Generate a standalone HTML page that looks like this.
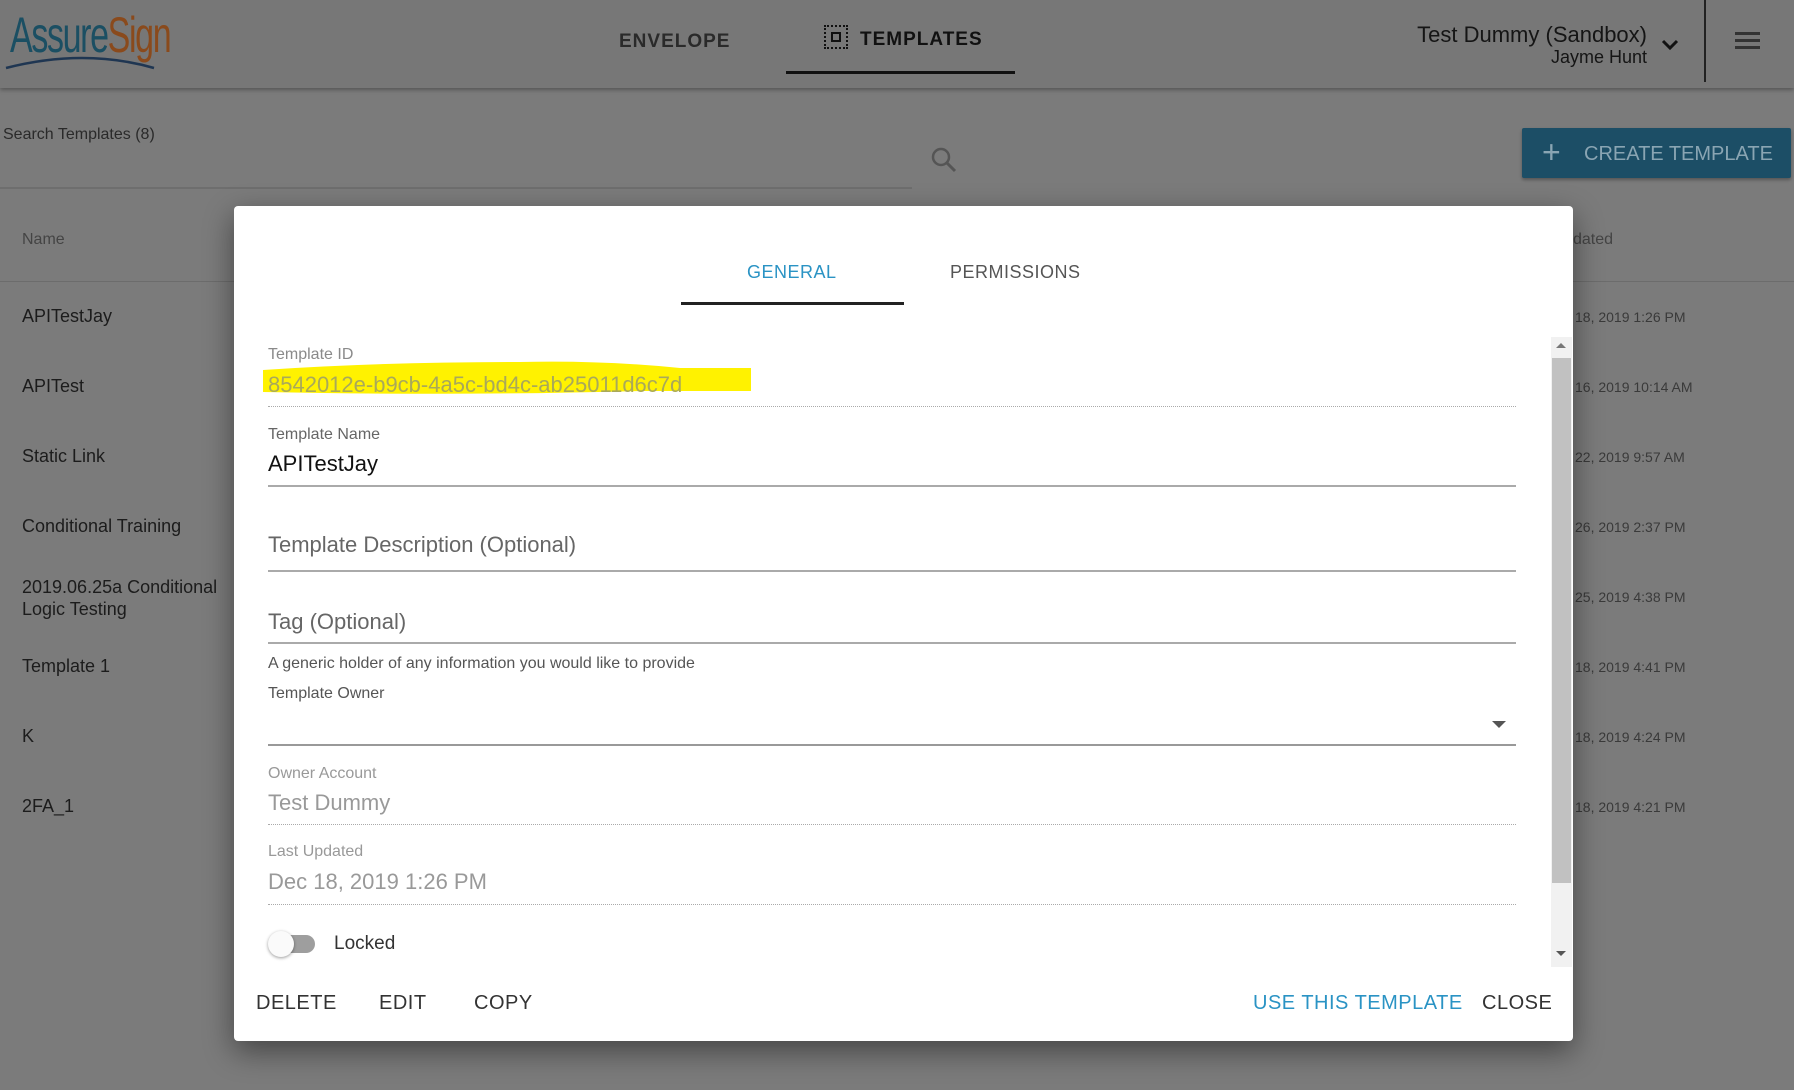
<!DOCTYPE html>
<html><head><meta charset="utf-8"><style>
*{margin:0;padding:0;box-sizing:border-box}
body{width:1794px;height:1090px;position:relative;overflow:hidden;background:#7b7b7b;font-family:"Liberation Sans",Arial,sans-serif}
.a{position:absolute;white-space:nowrap}
.hdr{left:0;top:0;width:1794px;height:88px;background:#777;box-shadow:0 2px 4px rgba(0,0,0,.3)}
.row{left:22px;font-size:18px;color:#1c1c1c}
.dt{left:1575px;font-size:14px;color:#3a3a3a}
.lbl{left:268px;font-size:16px;color:#8a8a8a}
.val{left:268px;font-size:22px}
.ln{left:268px;width:1248px;height:0}
.btn{font-size:20px;letter-spacing:.5px;color:#333}
</style></head><body>
<div class="a hdr"></div>
<div class="a" style="left:10px;top:6px;font-size:50px;font-family:'Liberation Sans Narrow','Liberation Sans',sans-serif;letter-spacing:-2px;transform:scaleX(.68);transform-origin:left"><span style="color:#1b4f63">Assure</span><span style="color:#8a4a1c">Sign</span></div>
<svg class="a" style="left:4px;top:48px" width="170" height="26"><path d="M2 20 Q80 0 150 20" stroke="#1f3652" stroke-width="2.5" fill="none"/></svg>
<div class="a" style="left:619px;top:31px;font-size:19px;font-weight:bold;color:#2a2a2a;letter-spacing:1px">ENVELOPE</div>
<div class="a" style="left:824px;top:25px;width:24px;height:24px;border:2px dotted #111"><div style="position:absolute;left:5px;top:5px;width:10px;height:10px;border:2px solid #111"></div></div>
<div class="a" style="left:860px;top:29px;font-size:19px;font-weight:bold;color:#111;letter-spacing:1px">TEMPLATES</div>
<div class="a" style="left:786px;top:71px;width:229px;height:3px;background:#111"></div>
<div class="a" style="right:147px;top:22px;font-size:22px;color:#151515">Test Dummy (Sandbox)</div>
<div class="a" style="right:147px;top:47px;font-size:18px;color:#151515">Jayme Hunt</div>
<svg class="a" style="left:1660px;top:38px" width="20" height="14"><path d="M3 3 L10 10 L17 3" stroke="#111" stroke-width="3" fill="none"/></svg>
<div class="a" style="left:1704px;top:0;width:2px;height:82px;background:#222"></div>
<div class="a" style="left:1735px;top:32px;width:25px;height:3px;background:#333;box-shadow:0 7px 0 #333,0 14px 0 #333"></div>
<div class="a" style="left:3px;top:126px;font-size:16px;color:#2a2a2a">Search Templates (8)</div>
<div class="a" style="left:0;top:187px;width:912px;height:2px;background:#6e6e6e"></div>
<svg class="a" style="left:930px;top:146px" width="28" height="28"><circle cx="11" cy="11" r="8" stroke="#555" stroke-width="2.5" fill="none"/><path d="M17 17 L25 25" stroke="#555" stroke-width="3"/></svg>
<div class="a" style="left:1522px;top:128px;width:269px;height:50px;background:#1c4e66;border-radius:2px;box-shadow:0 2px 3px rgba(0,0,0,.3)"></div>
<div class="a" style="left:1542px;top:134px;font-size:32px;color:#8aa5b3;font-weight:300">+</div>
<div class="a" style="left:1584px;top:143px;font-size:20px;color:#8aa5b3">CREATE TEMPLATE</div>
<div class="a" style="left:22px;top:231px;font-size:16px;color:#444">Name</div>
<div class="a" style="left:1573px;top:231px;font-size:16px;color:#444">dated</div>
<div class="a" style="left:0;top:281px;width:1794px;height:1px;background:#6c6c6c"></div>
<div class="a row" style="top:306px">APITestJay</div>
<div class="a row" style="top:376px">APITest</div>
<div class="a row" style="top:446px">Static Link</div>
<div class="a row" style="top:516px">Conditional Training</div>
<div class="a row" style="top:576px;line-height:22px">2019.06.25a Conditional<br>Logic Testing</div>
<div class="a row" style="top:656px">Template 1</div>
<div class="a row" style="top:726px">K</div>
<div class="a row" style="top:796px">2FA_1</div>
<div class="a dt" style="top:309px">18, 2019 1:26 PM</div>
<div class="a dt" style="top:379px">16, 2019 10:14 AM</div>
<div class="a dt" style="top:449px">22, 2019 9:57 AM</div>
<div class="a dt" style="top:519px">26, 2019 2:37 PM</div>
<div class="a dt" style="top:589px">25, 2019 4:38 PM</div>
<div class="a dt" style="top:659px">18, 2019 4:41 PM</div>
<div class="a dt" style="top:729px">18, 2019 4:24 PM</div>
<div class="a dt" style="top:799px">18, 2019 4:21 PM</div>

<div class="a" style="left:234px;top:206px;width:1339px;height:835px;background:#fff;border-radius:4px;box-shadow:0 10px 30px rgba(0,0,0,.45)"></div>
<div class="a" style="left:747px;top:262px;font-size:18px;color:#2a93c4;letter-spacing:.5px">GENERAL</div>
<div class="a" style="left:950px;top:262px;font-size:18px;color:#555;letter-spacing:.5px">PERMISSIONS</div>
<div class="a" style="left:681px;top:302px;width:223px;height:3px;background:#222"></div>

<svg class="a" style="left:260px;top:356px" width="494" height="40"><path d="M3 14 Q120 6 260 6 Q340 4 420 12 L491 12 L491 35 L380 35 Q200 40 3 36 Z" fill="#fff200"/></svg>
<div class="a lbl" style="top:346px">Template ID</div>
<div class="a val" style="top:372px;color:#a9a95a">8542012e-b9cb-4a5c-bd4c-ab25011d6c7d</div>
<div class="a ln" style="top:406px;border-top:1px dotted #aaa"></div>
<div class="a lbl" style="top:426px;color:#666">Template Name</div>
<div class="a val" style="top:451px;color:#111">APITestJay</div>
<div class="a ln" style="top:485px;border-top:2px solid #aaa"></div>
<div class="a val" style="top:532px;color:#666">Template Description (Optional)</div>
<div class="a ln" style="top:570px;border-top:2px solid #aaa"></div>
<div class="a val" style="top:609px;color:#666">Tag (Optional)</div>
<div class="a ln" style="top:642px;border-top:2px solid #aaa"></div>
<div class="a lbl" style="top:655px;color:#555">A generic holder of any information you would like to provide</div>
<div class="a lbl" style="top:685px;color:#555">Template Owner</div>
<svg class="a" style="left:1492px;top:721px" width="14" height="8"><path d="M0 0 L14 0 L7 7Z" fill="#555"/></svg>
<div class="a ln" style="top:744px;border-top:2px solid #999"></div>
<div class="a lbl" style="top:765px;color:#999">Owner Account</div>
<div class="a val" style="top:790px;color:#999">Test Dummy</div>
<div class="a ln" style="top:824px;border-top:1px dotted #aaa"></div>
<div class="a lbl" style="top:843px;color:#999">Last Updated</div>
<div class="a val" style="top:869px;color:#999">Dec 18, 2019 1:26 PM</div>
<div class="a ln" style="top:904px;border-top:1px dotted #aaa"></div>
<div class="a" style="left:281px;top:935px;width:34px;height:18px;border-radius:9px;background:#9e9e9e"></div>
<div class="a" style="left:268px;top:931px;width:26px;height:26px;border-radius:50%;background:#fafafa;box-shadow:0 1px 3px rgba(0,0,0,.4)"></div>
<div class="a" style="left:334px;top:933px;font-size:19px;color:#333">Locked</div>
<div class="a" style="left:1551px;top:337px;width:21px;height:630px;background:#f1f1f1"></div>
<div class="a" style="left:1552px;top:358px;width:19px;height:525px;background:#c1c1c1"></div>
<svg class="a" style="left:1556px;top:342px" width="10" height="8"><path d="M0 6 L5 1 L10 6Z" fill="#777"/></svg>
<svg class="a" style="left:1556px;top:950px" width="10" height="8"><path d="M0 1 L5 6 L10 1Z" fill="#555"/></svg>
<div class="a btn" style="left:256px;top:992px">DELETE</div>
<div class="a btn" style="left:379px;top:992px">EDIT</div>
<div class="a btn" style="left:474px;top:992px">COPY</div>
<div class="a btn" style="left:1253px;top:992px;color:#2a93c4">USE THIS TEMPLATE</div>
<div class="a btn" style="left:1482px;top:992px">CLOSE</div>
</body></html>
